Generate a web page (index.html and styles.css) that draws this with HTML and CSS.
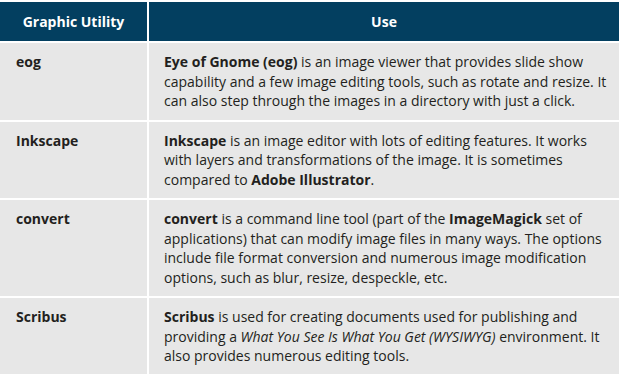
FILE: index.html
```html
<!DOCTYPE html>
<html lang="en">
<head>
    <meta charset="UTF-8" />
    <title>Graphic Utilities</title>
    <link rel="stylesheet" href="styles.css">
</head>
<body>
    <table class="utils">
        <thead>
            <tr>
                <th class="col-name">Graphic Utility</th>
                <th>Use</th>
            </tr>
        </thead>
        <tbody>
            <tr>
                <td class="col-name"><b>eog</b></td>
                <td><b>Eye of Gnome (eog)</b> is an image viewer that provides slide show capability and a few image editing tools, such as rotate and resize. It can also step through the images in a directory with just a click.</td>
            </tr>
            <tr>
                <td class="col-name"><b>Inkscape</b></td>
                <td><b>Inkscape</b> is an image editor with lots of editing features. It works with layers and transformations of the image. It is sometimes compared to <b>Adobe Illustrator</b>.</td>
            </tr>
            <tr>
                <td class="col-name"><b>convert</b></td>
                <td><b>convert</b> is a command line tool (part of the <b>ImageMagick</b> set of applications) that can modify image files in many ways. The options include file format conversion and numerous image modification options, such as blur, resize, despeckle, etc.</td>
            </tr>
            <tr>
                <td class="col-name"><b>Scribus</b></td>
                <td><b>Scribus</b> is used for creating documents used for publishing and providing a <i>What You See Is What You Get (WYSIWYG)</i> environment. It also provides numerous editing tools.</td>
            </tr>
        </tbody>
    </table>
</body>
</html>
```

FILE: styles.css
```css
body {
    margin: 0;
    padding-top: 2px;
    background: #fff;
    font-family: "Open Sans", Arial, sans-serif;
    font-size: 14px;
    color: #231f20;
}
.utils {
    width: 619px;
    border-collapse: collapse;
    table-layout: fixed;
}
.utils th,
.utils td {
    border-bottom: 2px solid #fff;
    vertical-align: top;
    text-align: left;
    line-height: 19.5px;
}
.utils th {
    background-color: #033f60;
    color: #fff;
    font-weight: 700;
    text-align: center;
    height: 39px;
    padding: 0;
    vertical-align: middle;
}
.utils td {
    background-color: #e7e7e7;
    padding: 9px 10px 9px 15px;
}
.utils .col-name {
    width: 148px;
    border-right: 2px solid #fff;
    box-sizing: border-box;
}
.utils td.col-name {
    padding-left: 16px;
}
```
